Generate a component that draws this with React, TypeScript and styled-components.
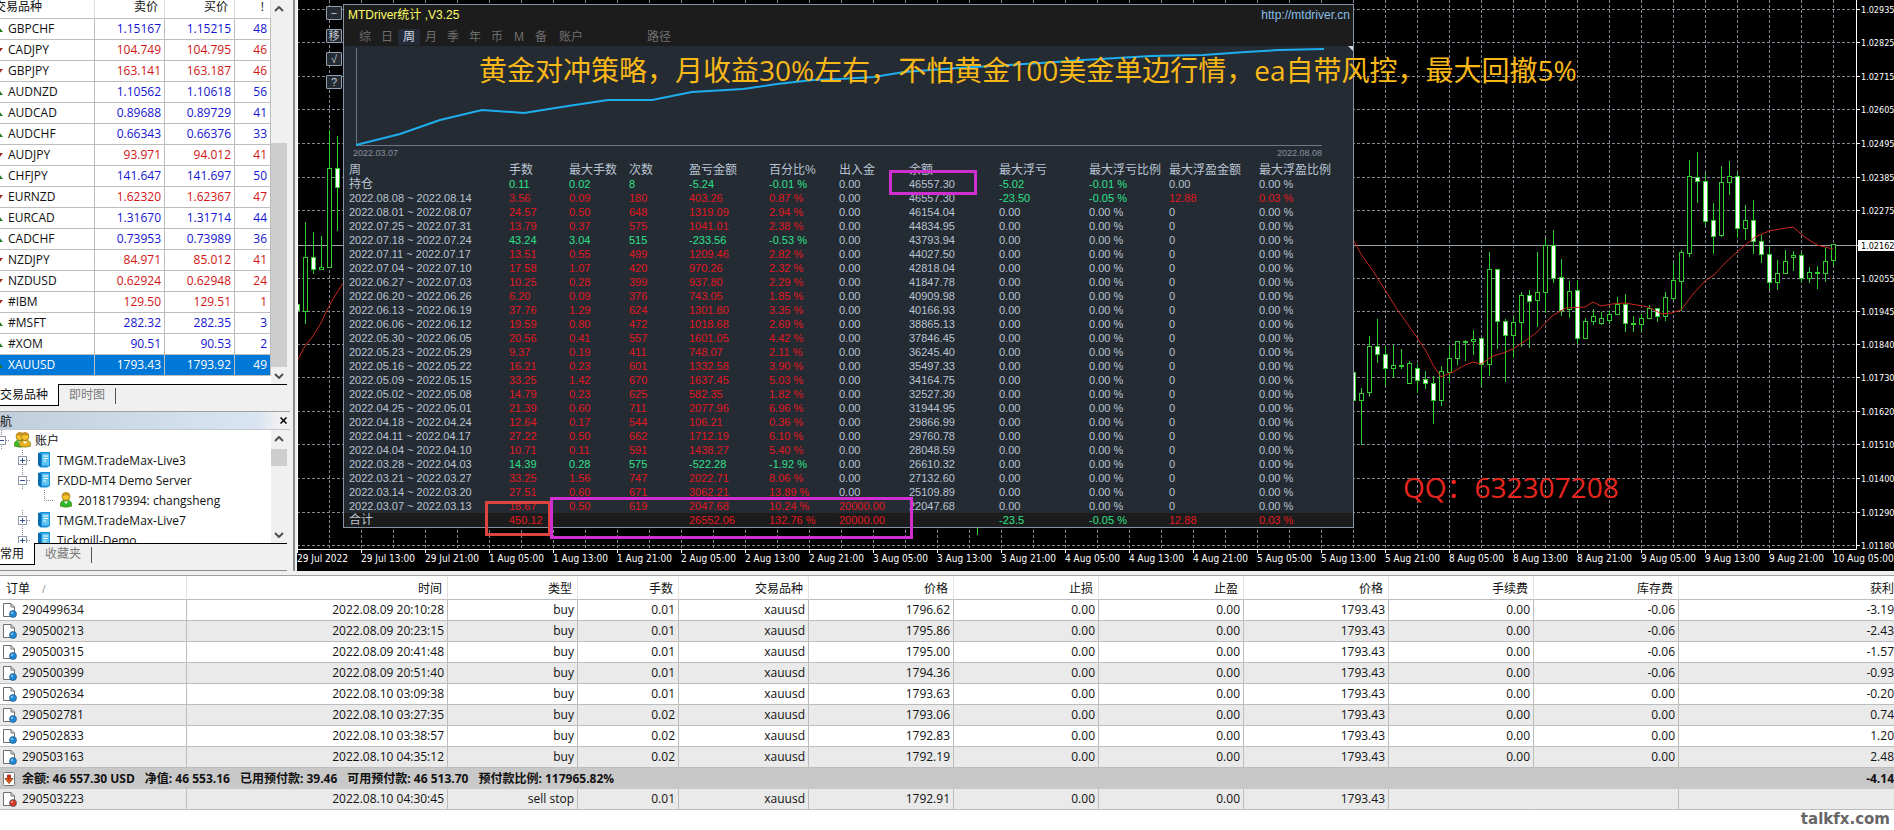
import React from "react";
import styled, { createGlobalStyle, css } from "styled-components";

const UI_FONT = `"Open Sans", "Noto Sans CJK SC", sans-serif`;
const PANEL_FONT = `"Liberation Sans", "Noto Sans CJK SC", sans-serif`;
const AXIS_FONT = `"DejaVu Sans Condensed", "DejaVu Sans", sans-serif`;
const BLUE = "#1414d2";
const RED = "#d21414";
const GRID = "#828992";
const CANDLE = "#32cd32";

const GlobalStyle = createGlobalStyle`
  * { box-sizing: border-box; }
  body { margin: 0; background: #fff; font-family: ${UI_FONT}; font-size: 12px; color: #111; }
  button { font: inherit; color: inherit; border: 0; padding: 0; background: none; cursor: pointer; }
  table { border-spacing: 0; table-layout: fixed; }
  th, td { padding: 0; font-weight: inherit; white-space: nowrap; }
`;

const Page = styled.main`
  min-height: 100vh;
  overflow: hidden;
  display: flex;
  flex-direction: column;
  background: #fff;
`;

const Workspace = styled.div`
  display: flex;
  background: #f0f0f0;
  padding-bottom: 4px;
`;

/* ---------- left dock ---------- */

const Dock = styled.aside`
  flex: none;
  width: 307px;
  margin-left: -12px;
  border-right: 2px solid #8c8c8c;
  padding-right: 6px;
  display: flex;
  flex-direction: column;
`;

const MarketPane = styled.section`
  display: flex;
  height: 384px;
  background: #fff;
`;

const MarketTable = styled.table`
  width: 283px;
  align-self: flex-start;
`;

const MarketHead = styled.th<{ $left?: boolean }>`
  height: 19px;
  padding: 0 6px 5px;
  line-height: 13px;
  text-align: ${(p) => (p.$left ? "left" : "right")};
  border-right: 1px solid #dcdcdc;
  border-bottom: 1px solid #bdbdbd;
`;

const MarketCell = styled.td`
  height: 21px;
  line-height: 20px;
  padding-right: 3px;
  text-align: right;
  border-right: 1px solid #bdbdbd;
  border-bottom: 1px solid #bdbdbd;
`;

const MarketRow = styled.tr<{ $up: boolean; $selected: boolean }>`
  color: ${(p) => (p.$selected ? "#fff" : p.$up ? BLUE : RED)};
  background: ${(p) => (p.$selected ? "#0078d7" : "#fff")};
`;

const SymbolCell = styled(MarketCell)<{ $selected: boolean }>`
  color: ${(p) => (p.$selected ? "#fff" : "#111")};
  text-align: left;
  padding: 0 0 0 7px;
`;

const ArrowIcon = styled.svg`
  width: 8px;
  height: 5px;
  margin-right: 5px;
  vertical-align: 1px;
`;

const ScrollBar = styled.div`
  width: 16px;
  background: #f0f0f0;
  display: flex;
  flex-direction: column;
  justify-content: space-between;
`;

const ScrollTrack = styled.div<{ $top: number }>`
  flex: 1;
  padding-top: ${(p) => p.$top}px;
`;

const ScrollThumb = styled.div<{ $size: number }>`
  height: ${(p) => p.$size}px;
  background: #cdcdcd;
`;

const ScrollButton = styled.button`
  height: 17px;
  display: grid;
  place-items: center;
`;

const TabStrip = styled.div`
  height: 22px;
  display: flex;
  border-top: 1px solid #000;
`;

const DockTab = styled.button<{ $active?: boolean }>`
  height: 20px;
  line-height: 18px;
  padding: 0 10px;
  ${(p) =>
    p.$active
      ? css`
          background: #fff;
          color: #111;
          height: 22px;
          margin-top: -1px;
          padding-left: 12px;
          border-right: 1px solid #000;
          border-bottom: 1px solid #000;
        `
      : css`
          color: #7b7b7b;
        `}
`;

const TabDivider = styled.span`
  width: 1px;
  height: 16px;
  margin-top: 3px;
  background: #555;
`;

const NavTitle = styled.header`
  margin: 5px -3px 0 0;
  height: 19px;
  display: flex;
  justify-content: space-between;
  align-items: center;
  border-top: 1px solid #a0a0a0;
  border-bottom: 1px solid #c4c8cc;
  background: linear-gradient(90deg, #bfcddb, #d9e5f2 270px, #f0f0f0 290px);
`;

const CloseButton = styled.button`
  width: 14px;
  height: 14px;
  display: grid;
  place-items: center;
`;

const TreePane = styled.section`
  display: flex;
  height: 113px;
  background: #fff;
  overflow: hidden;
`;

const Tree = styled.ul`
  width: 283px;
  margin: 0;
  padding: 0;
  list-style: none;
  overflow: hidden;
`;

const TreeRow = styled.li<{ $depth: number }>`
  height: 20px;
  display: flex;
  align-items: center;
  padding-left: ${(p) => [8, 29, 56][p.$depth]}px;
  gap: ${(p) => [4, 7, 6][p.$depth]}px;
`;

const DockFoot = styled.div`
  height: 6px;
  border-bottom: 1px solid #8c8c8c;
`;

/* ---------- chart ---------- */

const ChartArea = styled.section`
  position: relative;
  flex: 1;
  min-width: 0;
  margin-left: 2px;
  background: #000;
  overflow: hidden;
`;

const ChartSvg = styled.svg`
  position: absolute;
  inset: 0;
  width: 100%;
  height: 100%;
  font-family: ${AXIS_FONT};
`;

const TimeLabels = styled.g`
  fill: #fff;
  font-size: 10px;
`;

const PriceLabels = styled.g`
  fill: #fff;
  font-size: 9px;
`;

const Note = styled.p<{ $x: number; $y: number; $color: string }>`
  position: absolute;
  left: ${(p) => p.$x}px;
  top: ${(p) => p.$y}px;
  margin: 0;
  font-size: 28px;
  line-height: 40px;
  white-space: nowrap;
  color: ${(p) => p.$color};
`;

const Mark = styled.div<{ $x: number; $y: number; $w: number; $h: number; $color: string }>`
  position: absolute;
  left: ${(p) => p.$x}px;
  top: ${(p) => p.$y}px;
  width: ${(p) => p.$w}px;
  height: ${(p) => p.$h}px;
  border: 3px solid ${(p) => p.$color};
`;

const SideButtons = styled.div`
  position: absolute;
  left: 29px;
  top: 6px;
  display: flex;
  flex-direction: column;
  gap: 9px;
`;

const SideButton = styled.button`
  width: 16px;
  height: 14px;
  border: 1px solid #93a0b0;
  border-radius: 1px;
  background: #252b33;
  color: #c4ccd6;
  font-family: ${PANEL_FONT};
  font-size: 11px;
  line-height: 12px;
`;

/* ---------- statistics panel ---------- */

const StatsPanel = styled.section`
  position: absolute;
  left: 46px;
  top: 4px;
  width: 1011px;
  border: 1px solid #8794a3;
  background: #252b33;
  color: #b9c4d2;
  font-family: ${PANEL_FONT};
  font-size: 11px;
`;

const StatsHead = styled.header`
  height: 41px;
  padding: 2px 3px 0 4px;
  background: #1c1c1c;
  font-size: 12px;
`;

const StatsTitle = styled.div`
  display: flex;
  justify-content: space-between;
  line-height: 16px;
  color: #ffff66;
`;

const SiteLink = styled.a`
  color: #87bfe6;
  text-decoration: none;
`;

const StatsTabs = styled.nav`
  display: flex;
  margin-top: 6px;
  padding-left: 6px;
`;

const StatsTab = styled.button<{ $active?: boolean; $wide?: boolean }>`
  width: ${(p) => (p.$wide ? 38 : 22)}px;
  height: 16px;
  line-height: 16px;
  color: ${(p) => (p.$active ? "#d5deea" : "#6f6f6f")};
  background: ${(p) => (p.$active ? "#252b38" : "transparent")};
`;

const PathTab = styled(StatsTab)`
  margin-left: 50px;
`;

const Equity = styled.figure`
  margin: 0;
  height: 117px;
`;

const EquitySvg = styled.svg`
  display: block;
  width: 1009px;
  height: 101px;
`;

const EquityDates = styled.figcaption`
  display: flex;
  justify-content: space-between;
  padding: 0 31px 0 9px;
  font-size: 9px;
  line-height: 12px;
  color: #8892a0;
`;

const StatsTable = styled.table`
  width: 100%;
  line-height: 14px;
  text-align: left;
`;

const StatsHeadCell = styled.th`
  height: 14px;
  font-size: 12px;
  overflow: visible;
`;

const StatsCell = styled.td<{ $tone?: string }>`
  height: 14px;
  color: ${(p) => (p.$tone === "r" ? "#e01820" : p.$tone === "g" ? "#2fe08a" : "#b9c4d2")};
`;

const LeadCell = styled(StatsCell)<{ $cjk: boolean }>`
  padding-left: 5px;
  font-size: ${(p) => (p.$cjk ? 12 : 11)}px;
`;

const StatsFoot = styled.tfoot`
  background: #1c1c1c;
`;

/* ---------- terminal ---------- */

const Terminal = styled.section`
  border-top: 1px solid #a0a0a0;
  background: #fff;
`;

const OrderTable = styled.table`
  width: 100%;
`;

const OrderHead = styled.th`
  height: 24px;
  padding-right: 5px;
  text-align: right;
  border-right: 1px solid #e2e2e2;
  border-bottom: 1px solid #bdbdbd;
  &:first-child { text-align: left; padding-left: 6px; }
  &:last-child { padding-right: 0; border-right: 0; }
`;

const SortMark = styled.span`
  margin-left: 12px;
  font-size: 10px;
  color: #888;
`;

const OrderRow = styled.tr<{ $shade: boolean }>`
  background: ${(p) => (p.$shade ? "#eaeaea" : "#fff")};
`;

const OrderCell = styled.td<{ $open?: boolean }>`
  height: 21px;
  line-height: 20px;
  padding-right: 3px;
  text-align: right;
  border-right: 1px solid ${(p) => (p.$open ? "transparent" : "#bdbdbd")};
  border-bottom: 1px solid #bdbdbd;
  &:last-child { padding-right: 0; border-right: 0; }
`;

const TicketCell = styled(OrderCell)`
  text-align: left;
  padding-left: 2px;
`;

const BalanceCell = styled.td<{ $end?: boolean }>`
  height: 21px;
  line-height: 21px;
  padding-left: 2px;
  background: #c8c8c8;
  font-weight: 700;
  text-align: ${(p) => (p.$end ? "right" : "left")};
`;

const IconLine = styled.span`
  display: flex;
  align-items: center;
  gap: 5px;
`;

const Balance = styled.span`
  margin-right: 5px;
  white-space: pre;
`;

const Watermark = styled.footer`
  align-self: flex-end;
  padding-right: 4px;
  font-family: "DejaVu Sans", sans-serif;
  font-weight: 700;
  font-size: 15px;
  line-height: 19px;
  color: #666;
`;

/* ---------- data ---------- */

const quotes: [string, string, string, string, boolean][] = [
  ["GBPCHF", "1.15167", "1.15215", "48", true],
  ["CADJPY", "104.749", "104.795", "46", false],
  ["GBPJPY", "163.141", "163.187", "46", false],
  ["AUDNZD", "1.10562", "1.10618", "56", true],
  ["AUDCAD", "0.89688", "0.89729", "41", true],
  ["AUDCHF", "0.66343", "0.66376", "33", true],
  ["AUDJPY", "93.971", "94.012", "41", false],
  ["CHFJPY", "141.647", "141.697", "50", true],
  ["EURNZD", "1.62320", "1.62367", "47", false],
  ["EURCAD", "1.31670", "1.31714", "44", true],
  ["CADCHF", "0.73953", "0.73989", "36", true],
  ["NZDJPY", "84.971", "85.012", "41", false],
  ["NZDUSD", "0.62924", "0.62948", "24", false],
  ["#IBM", "129.50", "129.51", "1", false],
  ["#MSFT", "282.32", "282.35", "3", true],
  ["#XOM", "90.51", "90.53", "2", true],
  ["XAUUSD", "1793.43", "1793.92", "49", true],
];

const statHeads = ["周", "手数", "最大手数", "次数", "盈亏金额", "百分比%", "出入金", "余额", "最大浮亏", "最大浮亏比例", "最大浮盈金额", "最大浮盈比例"];
const statWidths = [165, 60, 60, 60, 80, 70, 70, 90, 90, 80, 90, 94];

type Week = { span: string; cells: string[]; balance: string };
const weeks: Week[] = [
  { span: "2022.08.01 ~ 2022.08.07", cells: ["24.57", "0.50", "648", "1319.09", "2.94 %"], balance: "46154.04" },
  { span: "2022.07.25 ~ 2022.07.31", cells: ["13.79", "0.37", "575", "1041.01", "2.38 %"], balance: "44834.95" },
  { span: "2022.07.18 ~ 2022.07.24", cells: ["43.24", "3.04", "515", "-233.56", "-0.53 %"], balance: "43793.94" },
  { span: "2022.07.11 ~ 2022.07.17", cells: ["13.51", "0.55", "499", "1209.46", "2.82 %"], balance: "44027.50" },
  { span: "2022.07.04 ~ 2022.07.10", cells: ["17.58", "1.07", "420", "970.26", "2.32 %"], balance: "42818.04" },
  { span: "2022.06.27 ~ 2022.07.03", cells: ["10.25", "0.28", "399", "937.80", "2.29 %"], balance: "41847.78" },
  { span: "2022.06.20 ~ 2022.06.26", cells: ["6.20", "0.09", "376", "743.05", "1.85 %"], balance: "40909.98" },
  { span: "2022.06.13 ~ 2022.06.19", cells: ["37.76", "1.29", "624", "1301.80", "3.35 %"], balance: "40166.93" },
  { span: "2022.06.06 ~ 2022.06.12", cells: ["19.59", "0.80", "472", "1018.68", "2.69 %"], balance: "38865.13" },
  { span: "2022.05.30 ~ 2022.06.05", cells: ["20.56", "0.41", "557", "1601.05", "4.42 %"], balance: "37846.45" },
  { span: "2022.05.23 ~ 2022.05.29", cells: ["9.37", "0.19", "411", "748.07", "2.11 %"], balance: "36245.40" },
  { span: "2022.05.16 ~ 2022.05.22", cells: ["16.21", "0.23", "601", "1332.58", "3.90 %"], balance: "35497.33" },
  { span: "2022.05.09 ~ 2022.05.15", cells: ["33.25", "1.42", "670", "1637.45", "5.03 %"], balance: "34164.75" },
  { span: "2022.05.02 ~ 2022.05.08", cells: ["14.79", "0.23", "625", "582.35", "1.82 %"], balance: "32527.30" },
  { span: "2022.04.25 ~ 2022.05.01", cells: ["21.39", "0.60", "711", "2077.96", "6.96 %"], balance: "31944.95" },
  { span: "2022.04.18 ~ 2022.04.24", cells: ["12.64", "0.17", "544", "106.21", "0.36 %"], balance: "29866.99" },
  { span: "2022.04.11 ~ 2022.04.17", cells: ["27.22", "0.50", "662", "1712.19", "6.10 %"], balance: "29760.78" },
  { span: "2022.04.04 ~ 2022.04.10", cells: ["10.71", "0.11", "591", "1438.27", "5.40 %"], balance: "28048.59" },
  { span: "2022.03.28 ~ 2022.04.03", cells: ["14.39", "0.28", "575", "-522.28", "-1.92 %"], balance: "26610.32" },
  { span: "2022.03.21 ~ 2022.03.27", cells: ["33.25", "1.56", "747", "2022.71", "8.06 %"], balance: "27132.60" },
  { span: "2022.03.14 ~ 2022.03.20", cells: ["27.51", "0.60", "671", "3062.21", "13.89 %"], balance: "25109.89" },
  { span: "2022.03.07 ~ 2022.03.13", cells: ["18.67", "0.50", "619", "2047.68", "10.24 %"], balance: "22047.68" },
];

type Line = { lead: string; cells: string[]; tones: string };
const statLines: Line[] = [
  { lead: "持仓", cells: ["0.11", "0.02", "8", "-5.24", "-0.01 %", "0.00", "46557.30", "-5.02", "-0.01 %", "0.00", "0.00 %"], tones: "ggggg..gg.." },
  { lead: "2022.08.08 ~ 2022.08.14", cells: ["3.56", "0.09", "180", "403.26", "0.87 %", "0.00", "46557.30", "-23.50", "-0.05 %", "12.88", "0.03 %"], tones: "rrrrr..ggrr" },
  ...weeks.map((w, i) => {
    const tone = w.cells[3].startsWith("-") ? "ggggg" : "rrrrr";
    const first = i === weeks.length - 1;
    return {
      lead: w.span,
      cells: [...w.cells, first ? "20000.00" : "0.00", w.balance, "0.00", "0.00 %", "0", "0.00 %"],
      tones: tone + (first ? "r" : ".") + ".....",
    };
  }),
];
const total: Line = {
  lead: "合计",
  cells: ["450.12", "", "", "26552.06", "132.76 %", "20000.00", "", "-23.5", "-0.05 %", "12.88", "0.03 %"],
  tones: "rrrrrr.ggrr",
};

const equity = "356,145 400,134 440,120 482,110 524,113 568,106 608,100 652,100 692,92 743,89 777,84 813,80 840,79 874,77 904,72 958,68 1009,65 1056,62 1083,60 1151,56 1203,55 1246,52 1279,50 1324,49";

const orderHeads = ["订单", "时间", "类型", "手数", "交易品种", "价格", "止损", "止盈", "价格", "手续费", "库存费", "获利"];
const orderWidths = [187, 261, 130, 101, 130, 145, 145, 145, 145, 145, 145];
const orders: string[][] = [
  ["290499634", "2022.08.09 20:10:28", "buy", "0.01", "1796.62", "-0.06", "-3.19"],
  ["290500213", "2022.08.09 20:23:15", "buy", "0.01", "1795.86", "-0.06", "-2.43"],
  ["290500315", "2022.08.09 20:41:48", "buy", "0.01", "1795.00", "-0.06", "-1.57"],
  ["290500399", "2022.08.09 20:51:40", "buy", "0.01", "1794.36", "-0.06", "-0.93"],
  ["290502634", "2022.08.10 03:09:38", "buy", "0.01", "1793.63", "0.00", "-0.20"],
  ["290502781", "2022.08.10 03:27:35", "buy", "0.02", "1793.06", "0.00", "0.74"],
  ["290502833", "2022.08.10 03:38:57", "buy", "0.02", "1792.83", "0.00", "1.20"],
  ["290503163", "2022.08.10 04:35:12", "buy", "0.02", "1792.19", "0.00", "2.48"],
];

/* x, body top, body bottom, wick top, wick bottom, filled (bearish) */
const candles: [number, number, number, number, number, number][] = [
  [297, 304, 310, 303, 325, 1], [305, 257, 311, 222, 323, 0], [313, 257, 269, 232, 273, 1], [321, 267, 269, 236, 269, 0],
  [329, 168, 267, 130, 267, 0], [337, 168, 187, 136, 230, 1],
  [1353, 372, 400, 372, 400, 1], [1361, 393, 400, 388, 444, 0], [1369, 346, 392, 336, 396, 0], [1377, 346, 354, 319, 362, 1],
  [1385, 354, 368, 346, 385, 1], [1393, 365, 368, 345, 377, 0], [1401, 365, 366, 349, 368, 0], [1409, 363, 383, 361, 383, 0],
  [1417, 368, 380, 364, 392, 1], [1425, 379, 383, 371, 388, 1], [1433, 383, 400, 376, 423, 1], [1441, 371, 400, 366, 405, 0],
  [1449, 358, 372, 346, 381, 0], [1457, 341, 358, 341, 364, 0], [1465, 341, 342, 340, 360, 0], [1473, 339, 341, 330, 354, 0],
  [1481, 338, 364, 338, 386, 1], [1489, 269, 364, 252, 375, 0], [1497, 269, 321, 269, 348, 1], [1505, 321, 335, 319, 381, 1],
  [1513, 322, 335, 317, 357, 0], [1521, 295, 322, 292, 346, 0], [1529, 295, 301, 290, 347, 1], [1537, 292, 300, 252, 326, 0],
  [1545, 245, 292, 238, 312, 0], [1553, 245, 278, 230, 282, 1], [1561, 277, 310, 259, 315, 1], [1569, 291, 309, 281, 317, 0],
  [1577, 290, 338, 280, 343, 1], [1585, 321, 338, 318, 338, 0], [1593, 316, 321, 309, 324, 0], [1601, 318, 323, 312, 324, 0],
  [1609, 314, 320, 310, 323, 0], [1617, 304, 314, 297, 314, 0], [1625, 304, 323, 294, 331, 1], [1633, 323, 324, 316, 331, 0],
  [1641, 318, 324, 314, 331, 0], [1649, 308, 318, 305, 318, 0], [1657, 308, 316, 308, 321, 1], [1665, 297, 316, 292, 320, 0],
  [1673, 280, 298, 263, 300, 0], [1681, 252, 281, 250, 310, 0], [1689, 176, 253, 160, 256, 0], [1697, 177, 181, 152, 202, 1],
  [1705, 181, 221, 173, 224, 1], [1713, 220, 236, 203, 253, 1], [1721, 182, 235, 166, 236, 0], [1729, 176, 182, 161, 194, 0],
  [1737, 176, 228, 172, 237, 1], [1745, 220, 228, 205, 239, 0], [1753, 220, 241, 200, 253, 1], [1761, 241, 254, 235, 262, 1],
  [1769, 254, 282, 246, 289, 1], [1777, 273, 282, 260, 289, 0], [1785, 261, 273, 250, 273, 0], [1793, 255, 257, 251, 270, 0],
  [1801, 255, 278, 252, 282, 1], [1809, 272, 278, 267, 282, 0], [1817, 272, 273, 266, 288, 0], [1825, 261, 273, 248, 281, 0],
  [1833, 244, 260, 244, 265, 0],
];

const prices: [number, string][] = [
  [9, "1.02935"], [42, "1.02825"], [76, "1.02715"], [109, "1.02605"], [143, "1.02495"], [177, "1.02385"], [210, "1.02275"],
  [245, ""], [278, "1.02055"], [311, "1.01945"], [344, "1.01840"], [377, "1.01730"], [411, "1.01620"], [444, "1.01510"],
  [478, "1.01400"], [512, "1.01290"], [545, "1.01180"],
];

const times = [
  "29 Jul 2022", "29 Jul 13:00", "29 Jul 21:00",
  ...[1, 2, 3, 4, 5, 8, 9].flatMap((d) => ["05:00", "13:00", "21:00"].map((t) => `${d} Aug ${t}`)),
  "10 Aug 05:00",
];

const maLeft = "297,361 305,346 313,336 321,323 327,310 333,299 343,283";
const maRight =
  "1354,241 1361,254 1373,271 1385,290 1397,309 1418,339 1426,351 1433,365 1441,377 1453,372 1465,365 1473,362 1481,364 1493,356 1503,353 1513,349 1525,341 1536,333 1552,316 1566,308 1585,307 1593,302 1601,306 1612,304 1625,303 1637,305 1648,307 1662,314 1671,313 1681,310 1693,294 1705,281 1714,275 1725,263 1737,252 1755,237 1769,231 1780,229 1793,227 1806,238 1817,245 1833,249";

/* ---------- small drawings ---------- */

const Trend = ({ up }: { up: boolean }) => (
  <ArrowIcon viewBox="0 0 8 5" aria-hidden="true">
    <path d={up ? "M0 5 4 0 8 5Z" : "M0 0H8L4 5Z"} fill={up ? "#1d7a1d" : "#9c2a1a"} />
  </ArrowIcon>
);

const Chevron = ({ down }: { down?: boolean }) => (
  <svg width="10" height="6" viewBox="0 0 10 6" aria-hidden="true">
    <path d={down ? "M1 1 5 5 9 1" : "M1 5 5 1 9 5"} fill="none" stroke="#505050" strokeWidth="2" />
  </svg>
);

const Scroller = ({ top, size }: { top: number; size: number }) => (
  <ScrollBar>
    <ScrollButton aria-label="向上滚动"><Chevron /></ScrollButton>
    <ScrollTrack $top={top}><ScrollThumb $size={size} /></ScrollTrack>
    <ScrollButton aria-label="向下滚动"><Chevron down /></ScrollButton>
  </ScrollBar>
);

const Expander = ({ open }: { open?: boolean }) => (
  <svg width="14" height="20" viewBox="0 0 14 20" aria-hidden="true">
    <path d="M5.500 0V20M10 10.500H14" stroke="#888" strokeDasharray="1 1" />
    <rect x="1.500" y="6.500" width="8" height="8" fill="#fff" stroke="#8c96a8" />
    <path d={open ? "M3 10.500H8" : "M3 10.500H8M5.500 8V13"} stroke="#34508c" />
  </svg>
);

const Elbow = () => (
  <svg width="10" height="20" viewBox="0 0 10 20" aria-hidden="true">
    <path d="M.500 0V10.500H10" fill="none" stroke="#888" strokeDasharray="1 1" />
  </svg>
);

const ServerIcon = () => (
  <svg width="12" height="16" viewBox="0 0 12 16" aria-hidden="true">
    <path d="M0 1 3 0H12V14L9 15.500H3L0 13Z" fill="#1690d8" />
    <path d="M0 1 3 2V15.500L0 13Z" fill="#0a6aae" />
    <path d="M4 1.500H11V13.500H4Z" fill="#5cc4f2" />
    <path d="M5.500 4H10M5.500 6.500H10M5.500 9H8" stroke="#fff" />
  </svg>
);

const Person = ({ x = 0, body }: { x?: number; body: string }) => (
  <g transform={`translate(${x} 0)`}>
    <path d="M0 14C0 9 3 8 6 8S12 9 12 14Q6 16.500 0 14Z" fill={body} stroke="#5d7a12" strokeWidth=".6" />
    <path d="M4 9.500 6 12 8 9.500Z" fill="#fff" />
    <circle cx="6" cy="4.500" r="4" fill="#f6c42c" stroke="#8a6410" strokeWidth=".7" />
    <path d="M2.500 4Q3 .500 6 .500T9.500 4Q6 2.500 2.500 4Z" fill="#c8921c" />
  </g>
);

const UserIcon = () => (
  <svg width="12" height="16" viewBox="0 0 12 16" aria-hidden="true"><Person body="#30b82c" /></svg>
);

const GroupIcon = () => (
  <svg width="17" height="16" viewBox="0 0 17 16" aria-hidden="true">
    <Person body="#3cb82c" />
    <Person x={5} body="#e8b020" />
  </svg>
);

const OrderIcon = ({ dot }: { dot: string }) => (
  <svg width="15" height="16" viewBox="0 0 15 16" aria-hidden="true">
    <path d="M1.500 1.500H9L12.500 5V14.500H1.500Z" fill="#fff" stroke="#6f6f6f" />
    <path d="M9 1.500V5H12.500" fill="none" stroke="#6f6f6f" />
    <circle cx="11" cy="12" r="3.500" fill={dot} stroke="#1b4b78" strokeWidth=".6" />
    <circle cx="10" cy="11" r="1" fill="#fff" opacity=".6" />
  </svg>
);

const BalanceIcon = () => (
  <svg width="15" height="16" viewBox="0 0 15 16" aria-hidden="true">
    <rect x="1.500" y="1.500" width="11" height="13" rx="1" fill="#fff" stroke="#777" />
    <path d="M5.500 4H8.500V7.500H11L7 12.500 3 7.500H5.500Z" fill="#e0701a" stroke="#8a2a10" strokeWidth=".8" />
    <path d="M7 4V10" stroke="#c42414" strokeWidth="1.500" />
  </svg>
);

/* ---------- sections ---------- */

const MarketWatch = () => (
  <>
    <MarketPane>
      <MarketTable>
        <colgroup><col width="107" /><col width="70" /><col width="70" /><col width="36" /></colgroup>
        <thead>
          <tr><MarketHead $left>交易品种</MarketHead><MarketHead>卖价</MarketHead><MarketHead>买价</MarketHead><MarketHead>!</MarketHead></tr>
        </thead>
        <tbody>
          {quotes.map(([name, bid, ask, spread, up]) => {
            const selected = name === "XAUUSD";
            return (
              <MarketRow key={name} $up={up} $selected={selected}>
                <SymbolCell $selected={selected}><Trend up={up} />{name}</SymbolCell>
                <MarketCell>{bid}</MarketCell>
                <MarketCell>{ask}</MarketCell>
                <MarketCell>{spread}</MarketCell>
              </MarketRow>
            );
          })}
        </tbody>
      </MarketTable>
      <Scroller top={126} size={224} />
    </MarketPane>
    <TabStrip>
      <DockTab $active>交易品种</DockTab>
      <DockTab>即时图</DockTab>
      <TabDivider />
    </TabStrip>
  </>
);

const Server = ({ name, open }: { name: string; open?: boolean }) => (
  <TreeRow $depth={1}><Expander open={open} /><ServerIcon />{name}</TreeRow>
);

const Navigator = () => (
  <>
    <NavTitle>
      导航
      <CloseButton aria-label="关闭">
        <svg width="7" height="7" viewBox="0 0 7 7"><path d="M.500 .500 6.500 6.500M6.500 .500 .500 6.500" stroke="#000" strokeWidth="1.500" /></svg>
      </CloseButton>
    </NavTitle>
    <TreePane>
      <Tree>
        <TreeRow $depth={0}><Expander open /><GroupIcon />账户</TreeRow>
        <Server name="TMGM.TradeMax-Live3" />
        <Server name="FXDD-MT4 Demo Server" open />
        <TreeRow $depth={2}><Elbow /><UserIcon />2018179394: changsheng</TreeRow>
        <Server name="TMGM.TradeMax-Live7" />
        <Server name="Tickmill-Demo" />
      </Tree>
      <Scroller top={2} size={17} />
    </TreePane>
    <TabStrip>
      <DockTab $active>常用</DockTab>
      <DockTab>收藏夹</DockTab>
      <TabDivider />
    </TabStrip>
    <DockFoot />
  </>
);

const PriceChart = () => (
  <ChartSvg viewBox="297 0 1597 571" preserveAspectRatio="xMinYMin slice">
    <g stroke={GRID} strokeDasharray="3 2">
      {prices.map(([y]) => <line key={y} x1="297" x2="1856" y1={y + 0.5} y2={y + 0.5} />)}
      {Array.from({ length: 48 }, (_, i) => 329.5 + i * 32).map((x) => <line key={x} x1={x} x2={x} y1="0" y2="549" />)}
    </g>
    <path d="M297 245.500H1856" stroke="#98a0aa" />
    <g stroke={CANDLE}>
      {candles.map(([x, top, bottom, high, low, filled]) => (
        <g key={x}>
          <line x1={x + 0.5} x2={x + 0.5} y1={high} y2={low + 1} />
          <rect x={x - 1.5} y={top + 0.5} width="4" height={Math.max(bottom - top, 1)} fill={filled ? "#fff" : "#000"} />
        </g>
      ))}
      <line x1="977.500" x2="977.500" y1="527" y2="535" />
    </g>
    <g fill="none" stroke="#c8281e">
      <polyline points={maLeft} />
      <polyline points={maRight} />
    </g>
    <path d="M297 549.500H1856.500V0M297.500 0V549" fill="none" stroke="#fff" />
    <g stroke="#fff">
      {prices.map(([y]) => <line key={y} x1="1856" x2="1860" y1={y + 0.5} y2={y + 0.5} />)}
      {times.map((t, i) => <line key={t} x1={297.5 + i * 64} x2={297.5 + i * 64} y1="549" y2="553" />)}
    </g>
    <rect x="1858" y="240" width="36" height="11" fill="#fff" />
    <PriceLabels>
      {prices.map(([y, label]) => label && <text key={y} x="1861" y={y + 4}>{label}</text>)}
      <text x="1861" y="249" fill="#000">1.02162</text>
    </PriceLabels>
    <TimeLabels>
      {times.map((t, i) => <text key={t} x={297 + i * 64} y="562">{t}</text>)}
    </TimeLabels>
  </ChartSvg>
);

const StatsLine = ({ line }: { line: Line }) => (
  <tr>
    <LeadCell $cjk={line.lead.length < 4}>{line.lead}</LeadCell>
    {line.cells.map((cell, i) => <StatsCell key={i} $tone={line.tones[i]}>{cell}</StatsCell>)}
  </tr>
);

const Stats = () => (
  <StatsPanel>
    <StatsHead>
      <StatsTitle>
        <span>MTDriver统计 ,V3.25</span>
        <SiteLink href="http://mtdriver.cn">http://mtdriver.cn</SiteLink>
      </StatsTitle>
      <StatsTabs>
        {["综", "日", "周", "月", "季", "年", "币", "M", "备"].map((t) => <StatsTab key={t} $active={t === "周"}>{t}</StatsTab>)}
        <StatsTab $wide>账户</StatsTab>
        <PathTab $wide>路径</PathTab>
      </StatsTabs>
    </StatsHead>
    <Equity>
      <EquitySvg viewBox="344 46 1009 101">
        <path d="M356.500 48V145.500H1322" fill="none" stroke="#6f7882" />
        <polyline points={equity} fill="none" stroke="#1eaeee" strokeWidth="2" />
        <path d="M1353 46V51L1348 46Z" fill="#d5d9de" />
      </EquitySvg>
      <EquityDates><span>2022.03.07</span><span>2022.08.08</span></EquityDates>
    </Equity>
    <StatsTable>
      <colgroup>{statWidths.map((w, i) => <col key={i} width={w} />)}</colgroup>
      <thead>
        <tr>
          {statHeads.map((h, i) => i === 0
            ? <LeadCell as="th" key={h} $cjk>{h}</LeadCell>
            : <StatsHeadCell key={h}>{h}</StatsHeadCell>)}
        </tr>
      </thead>
      <tbody>{statLines.map((line) => <StatsLine key={line.lead} line={line} />)}</tbody>
      <StatsFoot><StatsLine line={total} /></StatsFoot>
    </StatsTable>
  </StatsPanel>
);

const Order = ({ row, dot, shade, pending }: { row: string[]; dot: string; shade: boolean; pending?: boolean }) => {
  const [ticket, time, type, lots, open, swap, profit] = row;
  return (
    <OrderRow $shade={shade}>
      <TicketCell><IconLine><OrderIcon dot={dot} />{ticket}</IconLine></TicketCell>
      <OrderCell>{time}</OrderCell>
      <OrderCell>{type}</OrderCell>
      <OrderCell>{lots}</OrderCell>
      <OrderCell>xauusd</OrderCell>
      <OrderCell>{open}</OrderCell>
      <OrderCell>0.00</OrderCell>
      <OrderCell>0.00</OrderCell>
      <OrderCell>1793.43</OrderCell>
      <OrderCell $open={pending}>{pending ? "" : "0.00"}</OrderCell>
      <OrderCell>{swap}</OrderCell>
      <OrderCell>{profit}</OrderCell>
    </OrderRow>
  );
};

const balances = ["余额: 46 557.30 USD", "净值: 46 553.16", "已用预付款: 39.46", "可用预付款: 46 513.70", "预付款比例: 117965.82%"];

export default function App() {
  return (
    <Page>
      <GlobalStyle />
      <Workspace>
        <Dock>
          <MarketWatch />
          <Navigator />
        </Dock>
        <ChartArea>
          <PriceChart />
          <SideButtons>
            {["−", "移", "√", "?"].map((s) => <SideButton key={s}>{s}</SideButton>)}
          </SideButtons>
          <Stats />
          <Note $x={182} $y={50} $color="#f8b818">黄金对冲策略，月收益30%左右，不怕黄金100美金单边行情，ea自带风控，最大回撤5%</Note>
          <Note $x={1106} $y={467} $color="#e6261e">QQ：632307208</Note>
          <Mark $x={592} $y={170} $w={88} $h={25} $color="#d02fd0" />
          <Mark $x={188} $y={501} $w={66} $h={35} $color="#dc4440" />
          <Mark $x={253} $y={497} $w={363} $h={42} $color="#d02fd0" />
        </ChartArea>
      </Workspace>
      <Terminal>
        <OrderTable>
          <colgroup>{orderWidths.map((w, i) => <col key={i} width={w} />)}<col /></colgroup>
          <thead>
            <tr>{orderHeads.map((h, i) => <OrderHead key={i}>{h}{i === 0 && <SortMark>/</SortMark>}</OrderHead>)}</tr>
          </thead>
          <tbody>
            {orders.map((row, i) => <Order key={row[0]} row={row} dot="#1e8ad6" shade={i % 2 === 1} />)}
            <tr>
              <BalanceCell colSpan={11}>
                <IconLine><BalanceIcon />{balances.map((b) => <Balance key={b}>{b}</Balance>)}</IconLine>
              </BalanceCell>
              <BalanceCell $end>-4.14</BalanceCell>
            </tr>
            <Order row={["290503223", "2022.08.10 04:30:45", "sell stop", "0.01", "1792.91", "", ""]} dot="#dc3a20" shade pending />
          </tbody>
        </OrderTable>
      </Terminal>
      <Watermark>talkfx.com</Watermark>
    </Page>
  );
}
